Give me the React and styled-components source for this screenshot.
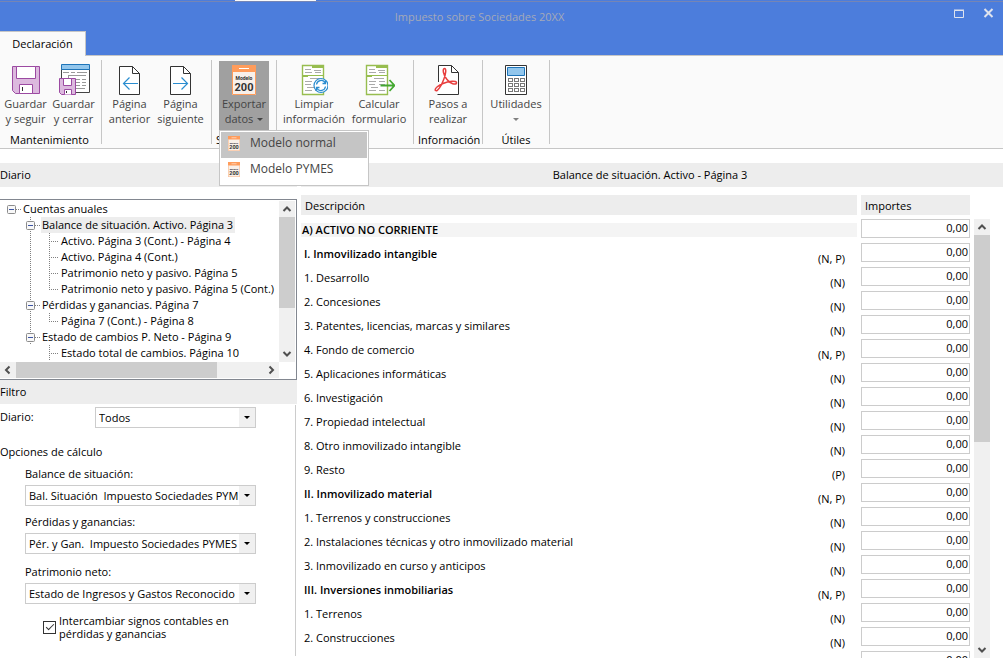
import React, { useState } from "react";
import styled, { createGlobalStyle, css } from "styled-components";

const Global = createGlobalStyle`
  *, *::before, *::after { box-sizing: border-box; }
  body {
    margin: 0;
    background: #fff;
    color: #000;
    font: 11px/14px "Open Sans", "Noto Sans", sans-serif;
  }
  button, input, select { font: inherit; color: inherit; }
  button { border: 0; padding: 0; background: none; }
  ul { list-style: none; margin: 0; padding: 0; }
  h1, h2, h3 { font: inherit; margin: 0; }
`;

const Window = styled.div`
  display: flex;
  flex-direction: column;
  height: 100vh;
  overflow: hidden;
`;

/* ---------- title bar ---------- */

const TitleBar = styled.header`
  display: grid;
  grid-template-columns: 1fr auto 1fr;
  grid-template-rows: 31px 24px;
  position: relative;
  background: #4c7ddc;
  border-bottom: 1px solid #c6c6c6;
  flex: none;
`;

const TopStrip = styled.span`
  position: absolute;
  inset: 0 0 auto 0;
  height: 2px;
  border-bottom: 1px solid #7585b5;
  &::after {
    content: "";
    position: absolute;
    left: 235px;
    width: 81px;
    height: 1px;
    background: #fafafa;
  }
`;

const Title = styled.h1`
  grid-column: 2;
  padding: 9px 44px 0 0;
  line-height: 16px;
  color: #a4a9b8;
`;

const WindowButtons = styled.div`
  display: flex;
  justify-content: flex-end;
  gap: 18px;
  padding: 8px 8px 0 0;
`;

const WindowButton = styled.button`
  width: 12px;
  height: 12px;
  svg { display: block; }
`;

const Tab = styled.button`
  grid-row: 2;
  justify-self: start;
  width: 86px;
  height: 25px;
  background: #fafafa;
  border: 1px solid #c6c6c6;
  border-width: 1px 1px 0 0;
  z-index: 1;
`;

/* ---------- ribbon ---------- */

const Ribbon = styled.nav`
  display: flex;
  flex: none;
  height: 93px;
  padding-top: 4px;
  background: #fafafa;
  border-bottom: 1px solid #c6c6c6;
`;

const Group = styled.section`
  position: relative;
  display: flex;
  flex-direction: column;
  padding: 1px ${(p) => p.$end || 0}px 0 0;
  width: ${(p) => p.$width}px;
  flex: none;
  h2 {
    padding: 2px 4px 0;
    text-align: ${(p) => p.$align || "center"};
    white-space: nowrap;
  }
`;

const Separator = styled.span`
  width: 1px;
  height: 84px;
  background: #c6c6c6;
  flex: none;
`;

const GroupButtons = styled.div`
  display: flex;
  justify-content: center;
`;

const RibbonButton = styled.button`
  display: flex;
  flex-direction: column;
  align-items: center;
  width: ${(p) => p.$width}px;
  height: 70px;
  padding-top: 3px;
  color: #444;
  line-height: 15px;
  white-space: pre;
  background: ${(p) => (p.$open ? "#a0a0a0" : "transparent")};
  > svg { flex: none; }
`;

const Caret = styled.span`
  display: inline-block;
  margin: ${(p) => (p.$alone ? "7px 0" : "0 0 2px 4px")};
  border: 3px solid transparent;
  border-top-color: ${(p) => (p.$alone ? "#808080" : "#444")};
  border-bottom-width: 0;
`;

const Menu = styled.ul`
  position: absolute;
  z-index: 5;
  top: 70px;
  left: 7px;
  width: 150px;
  padding: 1px;
  background: #fff;
  border: 1px solid #c6c6c6;
`;

const MenuItem = styled.button`
  display: flex;
  align-items: center;
  gap: 10px;
  width: 100%;
  height: 26px;
  padding-left: 7px;
  padding-bottom: 4px;
  font-size: 12px;
  color: #444;
  background: ${(p) => (p.$active ? "#c5c5c5" : "transparent")};
`;

/* ---------- body ---------- */

const Body = styled.main`
  display: grid;
  grid-template-columns: 297px minmax(0, 1fr);
  column-gap: 4px;
  flex: 1;
  min-height: 0;
  padding: 14px 0 4px;
`;

const Column = styled.section`
  display: flex;
  flex-direction: column;
  min-width: 0;
  min-height: 0;
`;

const Bar = styled.h2`
  flex: none;
  height: 24px;
  padding-right: 4px;
  line-height: 24px;
  background: #ededed;
  text-align: ${(p) => (p.$center ? "center" : "left")};
`;

const TreeBox = styled.div`
  display: grid;
  grid-template-columns: minmax(0, 1fr) 16px;
  grid-template-rows: 161px 16px;
  flex: none;
  margin-top: 12px;
  padding: 1px 1px 1px 0;
  border: 1px solid #828790;
  border-left: 0;
`;

const Tree = styled.ul`
  overflow: hidden;
`;

const TreeRow = styled.li`
  display: flex;
  height: 16px;
  padding-left: 2px;
  white-space: nowrap;
  svg { flex: none; }
`;

const TreeLabel = styled.button`
  margin-left: 1px;
  padding: 0 2px 0 1px;
  line-height: 16px;
  background: ${(p) => (p.$selected ? "#ededed" : "transparent")};
`;

const Scroll = styled.div`
  display: flex;
  flex-direction: ${(p) => (p.$horizontal ? "row" : "column")};
  background: #f0f0f0;
  flex: none;
  ${(p) => (p.$horizontal ? css`height: 16px;` : css`width: 16px;`)}
  > button { flex: none; width: 16px; height: 16px; }
  > button svg { display: block; }
`;

const Track = styled.div`
  display: flex;
  flex: 1;
  flex-direction: ${(p) => (p.$horizontal ? "row" : "column")};
`;

const Thumb = styled.span`
  background: #cdcdcd;
  flex: 0 0 ${(p) => p.$size}px;
`;

const Filter = styled.form`
  display: flex;
  flex-direction: column;
  flex: 1;
  margin: 1px 1px 2px 0;
  padding-top: 2px;
  border-right: 1px solid #ccc;
  h3 { line-height: 13px; }
`;

const FieldRow = styled.div`
  display: grid;
  grid-template-columns: 95px 161px;
  margin-bottom: 17px;
  line-height: 20px;
`;

const Field = styled.div`
  display: grid;
  width: 231px;
  margin: ${(p) => (p.$wide ? "11px" : "9px")} 0 0 25px;
  row-gap: 4px;
`;

const SelectWrap = styled.div`
  position: relative;
  height: 21px;
  border: 1px solid #ccc;
  background: #fff;
  svg {
    position: absolute;
    top: 0;
    right: 0;
    pointer-events: none;
  }
`;

const Select = styled.select`
  display: block;
  appearance: none;
  width: 100%;
  height: 19px;
  padding: 0 16px 0 3px;
  border: 0;
  outline: 0;
  background: transparent;
  text-overflow: clip;
`;

const CheckRow = styled.label`
  display: flex;
  align-items: center;
  gap: 3px;
  margin: 10px 0 0 43px;
  line-height: 13px;
`;

const CheckBox = styled.input`
  appearance: none;
  flex: none;
  width: 13px;
  height: 13px;
  margin: 0;
  border: 1px solid #333;
  display: grid;
  place-items: center;
  &:checked::after {
    content: "";
    width: 8px;
    height: 4px;
    margin-top: -2px;
    border: solid #333;
    border-width: 0 0 1px 1px;
    transform: rotate(-45deg);
  }
`;

/* ---------- amounts table ---------- */

const Sheet = styled.div`
  display: flex;
  gap: 4px;
  flex: 1;
  min-height: 0;
  margin-top: 8px;
  padding-right: 13px;
  overflow: hidden;
`;

const SheetBody = styled.div`
  flex: 1;
  min-width: 0;
  overflow: hidden;
`;

const Table = styled.table`
  width: 100%;
  table-layout: fixed;
  border-collapse: collapse;
  th, td { padding: 0; vertical-align: top; text-align: left; font-weight: inherit; }
  col:nth-child(2) { width: 60px; }
  col:nth-child(3) { width: 109px; }
  th { padding-bottom: 4px; }
  th:first-child { padding-right: 4px; }
`;

const HeadLabel = styled.span`
  display: block;
  height: 20px;
  padding: 3px 4px;
  line-height: 16px;
  background: #ededed;
`;

const Row = styled.tr`
  height: 24px;
`;

const Concept = styled.span`
  display: block;
  margin: 4px ${(p) => (p.$level === 0 ? 4 : 0)}px 0 0;
  padding-left: ${(p) => (p.$level === 0 ? 1 : 3)}px;
  height: 14px;
  white-space: nowrap;
  font-weight: ${(p) => (p.$level < 2 ? 600 : 400)};
  background: ${(p) => (p.$level === 0 ? "#f4f4f4" : "transparent")};
`;

const Note = styled.span`
  display: block;
  padding: 9px 16px 0 0;
  line-height: 14px;
  text-align: right;
  white-space: nowrap;
`;

const Amount = styled.input`
  display: block;
  width: 100%;
  height: 19px;
  padding: 0 1px 2px 2px;
  border: 1px solid #ccc;
  outline: 0;
  text-align: right;
`;

const ScrollColumn = styled.div`
  display: flex;
  padding-top: 24px;
`;

/* ---------- drawings ---------- */

const SaveIcon = () => (
  <svg width="30" height="32" viewBox="0 0 30 32">
    <path d="M1.500 2.500h27v27H4.500l-3-3z" fill="#dcb9de" stroke="#9c4aa2" />
    <path d="M5.500 2.500h19v12h-19z" fill="#fff" stroke="#9c4aa2" />
    <path d="M8.500 29.500v-9h13v9z" fill="#fff" stroke="#9c4aa2" />
    <path d="M11.500 23v4" stroke="#333" />
  </svg>
);

const SaveCloseIcon = () => (
  <svg width="32" height="32" viewBox="0 0 32 32">
    <path d="M3.500 5.500h28v23h-28z" fill="#fff" stroke="#444" />
    <path d="M3.500 .5h28v5h-28z" fill="#92c6ec" stroke="#1e74b8" />
    <path d="M5 8.500h6m2 0h4m2 0h10M10 11.500h18M10.500 11v4M18 15.500h4m2 0h4m-10 3h4m2 0h4m-10 3h4m2 0h4m-10 3h9" stroke="#999" fill="none" />
    <path d="M1.500 14.500h16v16H3.500l-2-2z" fill="#dcb9de" stroke="#9c4aa2" />
    <path d="M5.500 14.500h8v7h-8zM6.500 30.500v-5h7v5" fill="#fff" stroke="#9c4aa2" />
    <path d="M8.500 27v2" stroke="#333" />
  </svg>
);

const PageIcon = ({ next }) => (
  <svg width="24" height="32" viewBox="0 0 24 32">
    <path d="M1.500 2.500h13l7 7v21h-20z" fill="#fff" stroke="#333" />
    <path d="M14.500 2.500v7h7" fill="none" stroke="#333" />
    <path
      d={next ? "M4 19.500h14M12.500 13.500l6 6-6 6" : "M20 19.500H6M11.500 13.500l-6 6 6 6"}
      fill="none"
      stroke="#2a8dd0"
      strokeWidth="1.200"
    />
  </svg>
);

const ModelIcon = ({ small }) => (
  <svg width={small ? 12 : 24} height={small ? 15 : 32} viewBox={small ? "0 1 24 30" : "0 0 24 32"}>
    <path d="M0 1h24v30H0z" fill="#f8f0ea" />
    <path d="M.5 8v22.500h23V8" fill="none" stroke="#ff9c5b" />
    <path d="M0 1h24v7H0z" fill="#ff9c5b" />
    <path d="M7 4.500h10" stroke="#fff" />
    <text x="12" y="16" fontSize="5" fontWeight="700" textAnchor="middle" fill="#333" fontFamily="Roboto, sans-serif">Modelo</text>
    <text x="12" y="27" fontSize="11" fontWeight="700" textAnchor="middle" fill="#333" fontFamily="Roboto, sans-serif">200</text>
  </svg>
);

const FormBase = () => (
  <>
    <path d="M1.500 1.500h21v29h-21z" fill="#fff" stroke="#97bd4f" strokeWidth="1.400" />
    <path d="M11 1h12v3H11zM1 11h6v2H1z" fill="#97bd4f" />
    <path d="M1 11.500h22" stroke="#97bd4f" />
    <path d="M4 5.500h6m3 1h7M4 8.500h7m3 0h6M9 14.500h10M4 17.500h7m3 0h6M4 20.500h6m4 0h6M6 23.500h7M4 26.500h7m3 0h6" stroke="#aaa" />
  </>
);

const CleanIcon = () => (
  <svg width="28" height="32" viewBox="-1 0 28 32">
    <FormBase />
    <circle cx="20" cy="21.500" r="7" fill="#fff" stroke="#2a8dd0" strokeWidth="1.200" />
    <path d="M15.500 20.500a4.700 4.700 0 0 1 8.500-2m.5-2v3h-3M24.500 22.500a4.700 4.700 0 0 1-8.500 2m-.5 2v-3h3" fill="none" stroke="#2a8dd0" strokeWidth="1.300" />
  </svg>
);

const CalcFormIcon = () => (
  <svg width="32" height="32" viewBox="-2 0 32 32">
    <FormBase />
    <path d="M15.500 21.500H29M24.500 16l5 5.500-5 5.500" fill="none" stroke="#43a830" strokeWidth="1.800" />
  </svg>
);

const PdfIcon = () => (
  <svg width="28" height="32" viewBox="0 0 28 32">
    <path d="M4.500 18V1.500h13l7 7v22h-21" fill="#fff" stroke="#333" />
    <path d="M17.500 1.500v7h7" fill="none" stroke="#333" />
    <path
      d="M10.500 4.500c-2.500 0-1 7 2.500 11 3 4 9 6 9.500 3.500.5-2.800-8-2-13.500.5C4.500 21.500 0 24.500 1.500 26.500c2 1.500 6-5 8-10.500C12 10 12.500 4.500 10.500 4.500z"
      fill="none"
      stroke="#e83e3e"
      strokeWidth="1.500"
    />
  </svg>
);

const CalculatorIcon = () => (
  <svg width="24" height="32" viewBox="0 0 24 32">
    <path d="M1.500 1.500h21v29h-21z" fill="#fff" stroke="#333" />
    <path d="M3.500 3.500h17v8h-17z" fill="#92c6ec" stroke="#1e74b8" />
    {[14.5, 19.5, 24.5].map((y) =>
      [4.5, 10.5, 16.5].map((x) => (
        <rect key={`${x}-${y}`} x={x} y={y} width="4" height="3" fill="#fff" stroke="#777" />
      ))
    )}
  </svg>
);

const DropArrow = () => (
  <svg width="16" height="19" viewBox="0 0 16 19">
    <path d="M0 0h16v19H0z" fill="#f0f0f0" />
    <path d="M5 8h6l-3 3z" fill="#000" />
  </svg>
);

const arrows = {
  up: "M4.500 10L8 6.500l3.500 3.500",
  down: "M4.500 6L8 9.500 11.500 6",
  left: "M9.500 4.500L6 8l3.500 3.500",
  right: "M6.500 4.500L10 8l-3.500 3.500",
};

const ScrollButton = ({ dir, label }) => (
  <button type="button" aria-label={label}>
    <svg width="16" height="16" viewBox="0 0 16 16">
      <path d={arrows[dir]} fill="none" stroke="#505050" strokeWidth="2" />
    </svg>
  </button>
);

const ScrollBar = ({ horizontal, thumb }) => (
  <Scroll $horizontal={horizontal}>
    <ScrollButton dir={horizontal ? "left" : "up"} label={horizontal ? "Izquierda" : "Arriba"} />
    <Track $horizontal={horizontal}>
      <Thumb $size={thumb} />
    </Track>
    <ScrollButton dir={horizontal ? "right" : "down"} label={horizontal ? "Derecha" : "Abajo"} />
  </Scroll>
);

/* One 19px step of a tree row: "box" toggle, "line", "tee", "end" or blank. */
const TreeGuide = ({ kind }) => {
  const dots = { stroke: "#808080", strokeDasharray: "1 1", fill: "none" };
  return (
    <svg width="19" height="16" viewBox="0 0 19 16">
      {(kind === "line" || kind === "tee") && <path d="M9.500 0v16" {...dots} />}
      {kind === "end" && <path d="M9.500 0v9" {...dots} />}
      {(kind === "tee" || kind === "end") && <path d="M9 8.500h9" {...dots} />}
      {(kind === "box" || kind === "root") && (
        <>
          {kind === "box" && <path d="M9.500 0v16" {...dots} />}
          <path d="M14 8.500h5" {...dots} />
          <rect x="5.500" y="4.500" width="8" height="8" rx="1" fill="#f8f8f8" stroke="#8c8c8c" />
          <path d="M7 8.500h5" stroke="#3c55a5" />
        </>
      )}
    </svg>
  );
};

/* ---------- data ---------- */

const tree = [
  { guides: ["root"], text: "Cuentas anuales" },
  { guides: ["", "box"], text: "Balance de situación. Activo. Página 3", selected: true },
  { guides: ["", "line", "tee"], text: "Activo. Página 3 (Cont.) - Página 4" },
  { guides: ["", "line", "tee"], text: "Activo. Página 4 (Cont.)" },
  { guides: ["", "line", "tee"], text: "Patrimonio neto y pasivo. Página 5" },
  { guides: ["", "line", "end"], text: "Patrimonio neto y pasivo. Página 5 (Cont.)" },
  { guides: ["", "box"], text: "Pérdidas y ganancias. Página 7" },
  { guides: ["", "line", "end"], text: "Página 7 (Cont.) - Página 8" },
  { guides: ["", "box"], text: "Estado de cambios P. Neto - Página 9" },
  { guides: ["", "", "tee"], text: "Estado total de cambios. Página 10" },
];

const rows = [
  [0, "A) ACTIVO NO CORRIENTE", ""],
  [1, "I. Inmovilizado intangible", "(N, P)"],
  [2, "1. Desarrollo", "(N)"],
  [2, "2. Concesiones", "(N)"],
  [2, "3. Patentes, licencias, marcas y similares", "(N)"],
  [2, "4. Fondo de comercio", "(N, P)"],
  [2, "5. Aplicaciones informáticas", "(N)"],
  [2, "6. Investigación", "(N)"],
  [2, "7. Propiedad intelectual", "(N)"],
  [2, "8. Otro inmovilizado intangible", "(N)"],
  [2, "9. Resto", "(P)"],
  [1, "II. Inmovilizado material", "(N, P)"],
  [2, "1. Terrenos y construcciones", "(N)"],
  [2, "2. Instalaciones técnicas y otro inmovilizado material", "(N)"],
  [2, "3. Inmovilizado en curso y anticipos", "(N)"],
  [1, "III. Inversiones inmobiliarias", "(N, P)"],
  [2, "1. Terrenos", "(N)"],
  [2, "2. Construcciones", "(N)"],
  [2, "", ""],
];

const options = [
  { id: "balance", label: "Balance de situación:", value: "Bal. Situación\u00a0 Impuesto Sociedades PYM" },
  { id: "pyg", label: "Pérdidas y ganancias:", value: "Pér. y Gan.\u00a0 Impuesto Sociedades PYMES" },
  { id: "neto", label: "Patrimonio neto:", value: "Estado de Ingresos y Gastos Reconocido", wide: true },
];

const Combo = ({ id, value }) => (
  <SelectWrap>
    <Select id={id} defaultValue={value}>
      <option>{value}</option>
    </Select>
    <DropArrow />
  </SelectWrap>
);

export default function App() {
  const [swap, setSwap] = useState(true);
  return (
    <Window>
      <Global />
      <TitleBar>
        <TopStrip />
        <Title>Impuesto sobre Sociedades 20XX</Title>
        <WindowButtons>
          <WindowButton aria-label="Maximizar">
            <svg width="12" height="12" viewBox="0 0 12 12">
              <path d="M1.500 2.500h9v7h-9zM1 2h10" fill="none" stroke="#dfe3ee" />
            </svg>
          </WindowButton>
          <WindowButton aria-label="Cerrar">
            <svg width="12" height="12" viewBox="0 0 12 12">
              <path d="M1.500 1l8 8M9.500 1l-8 8" fill="none" stroke="#dfe3ee" strokeWidth="2" />
            </svg>
          </WindowButton>
        </WindowButtons>
        <Tab>Declaración</Tab>
      </TitleBar>

      <Ribbon>
        <Group $width={101} $end={2}>
          <GroupButtons>
            <RibbonButton $width={48}><SaveIcon />{"Guardar\ny seguir"}</RibbonButton>
            <RibbonButton $width={48}><SaveCloseIcon />{"Guardar\ny cerrar"}</RibbonButton>
          </GroupButtons>
          <h2>Mantenimiento</h2>
        </Group>
        <Separator />
        <Group $width={109} $end={2}>
          <GroupButtons>
            <RibbonButton $width={50}><PageIcon />{"Página\nanterior"}</RibbonButton>
            <RibbonButton $width={52}><PageIcon next />{"Página\nsiguiente"}</RibbonButton>
          </GroupButtons>
        </Group>
        <Separator />
        <Group $width={64} $align="left">
          <GroupButtons>
            <RibbonButton $width={50} $open>
              <ModelIcon />
              <span>{"Exportar\ndatos"}<Caret /></span>
            </RibbonButton>
          </GroupButtons>
          <h2>S</h2>
          <Menu>
            <li><MenuItem $active><ModelIcon small />Modelo normal</MenuItem></li>
            <li><MenuItem><ModelIcon small />Modelo PYMES</MenuItem></li>
          </Menu>
        </Group>
        <Separator />
        <Group $width={136}>
          <GroupButtons>
            <RibbonButton $width={68}><CleanIcon />{"Limpiar\ninformación"}</RibbonButton>
            <RibbonButton $width={62}><CalcFormIcon />{"Calcular\nformulario"}</RibbonButton>
          </GroupButtons>
        </Group>
        <Separator />
        <Group $width={68}>
          <GroupButtons>
            <RibbonButton $width={60}><PdfIcon />{"Pasos a\nrealizar"}</RibbonButton>
          </GroupButtons>
          <h2>Información</h2>
        </Group>
        <Separator />
        <Group $width={66}>
          <GroupButtons>
            <RibbonButton $width={60}><CalculatorIcon />Utilidades<Caret $alone /></RibbonButton>
          </GroupButtons>
          <h2>Útiles</h2>
        </Group>
        <Separator />
      </Ribbon>

      <Body>
        <Column>
          <Bar>Diario</Bar>
          <TreeBox>
            <Tree>
              {tree.map((n) => (
                <TreeRow key={n.text}>
                  {n.guides.map((g, i) => <TreeGuide key={i} kind={g} />)}
                  <TreeLabel $selected={n.selected}>{n.text}</TreeLabel>
                </TreeRow>
              ))}
            </Tree>
            <ScrollBar thumb={91} />
            <ScrollBar horizontal thumb={201} />
          </TreeBox>
          <Bar>Filtro</Bar>
          <Filter>
            <FieldRow>
              <label htmlFor="diario">Diario:</label>
              <Combo id="diario" value="Todos" />
            </FieldRow>
            <h3>Opciones de cálculo</h3>
            {options.map((o) => (
              <Field key={o.id} $wide={o.wide}>
                <label htmlFor={o.id}>{o.label}</label>
                <Combo id={o.id} value={o.value} />
              </Field>
            ))}
            <CheckRow>
              <CheckBox type="checkbox" checked={swap} onChange={(e) => setSwap(e.target.checked)} />
              <span>Intercambiar signos contables en<br />pérdidas y ganancias</span>
            </CheckRow>
          </Filter>
        </Column>

        <Column>
          <Bar $center>Balance de situación. Activo - Página 3</Bar>
          <Sheet>
            <SheetBody>
              <Table>
                <colgroup><col /><col /><col /></colgroup>
                <thead>
                  <tr>
                    <th colSpan={2}><HeadLabel>Descripción</HeadLabel></th>
                    <th><HeadLabel>Importes</HeadLabel></th>
                  </tr>
                </thead>
                <tbody>
                  {rows.map(([level, text, note], i) => (
                    <Row key={i}>
                      <td colSpan={level === 0 ? 2 : 1}><Concept $level={level}>{text}</Concept></td>
                      {level > 0 && <td><Note>{note}</Note></td>}
                      <td><Amount defaultValue="0,00" aria-label={text || "Importe"} /></td>
                    </Row>
                  ))}
                </tbody>
              </Table>
            </SheetBody>
            <ScrollColumn>
              <ScrollBar thumb={207} />
            </ScrollColumn>
          </Sheet>
        </Column>
      </Body>
    </Window>
  );
}
